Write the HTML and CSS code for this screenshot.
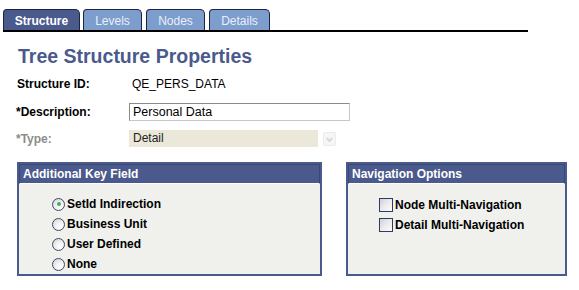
FILE: index.html
```html
<!DOCTYPE html>
<html>
<head>
<meta charset="utf-8">
<link rel="stylesheet" href="styles.css">
</head>
<body>
<div class="page">
  <div class="tabs">
    <div class="tab active t1">Structure</div>
    <div class="tab t2">Levels</div>
    <div class="tab t3">Nodes</div>
    <div class="tab t4">Details</div>
  </div>
  <h1 class="title">Tree Structure Properties</h1>
  <div class="form">
    <div class="row r1">
      <span class="label">Structure ID:</span>
      <span class="value">QE_PERS_DATA</span>
    </div>
    <div class="row r2">
      <span class="label">*Description:</span>
      <span class="input">Personal Data</span>
    </div>
    <div class="row r3">
      <span class="label disabled">*Type:</span>
      <span class="select">Detail</span>
      <span class="drop"><svg width="12" height="12" viewBox="0 0 12 12"><path d="M3 5 L6 8 L9 5" fill="none" stroke="#d6d6d6" stroke-width="2"/></svg></span>
    </div>
  </div>
  <div class="groups">
    <div class="box left">
      <div class="head">Additional Key Field</div>
      <div class="body radios">
        <div class="opt"><span class="radio on"></span>SetId Indirection</div>
        <div class="opt"><span class="radio"></span>Business Unit</div>
        <div class="opt"><span class="radio"></span>User Defined</div>
        <div class="opt"><span class="radio"></span>None</div>
      </div>
    </div>
    <div class="box right">
      <div class="head">Navigation Options</div>
      <div class="body checks">
        <div class="opt"><span class="check"></span>Node Multi-Navigation</div>
        <div class="opt"><span class="check"></span>Detail Multi-Navigation</div>
      </div>
    </div>
  </div>
</div>
</body>
</html>
```
FILE: styles.css
```css
* { box-sizing: border-box; }
html, body { margin: 0; padding: 0; background: #fff; }
body { font-family: "Liberation Sans", Arial, sans-serif; font-size: 12px; color: #000; }
.page { width: 579px; height: 290px; padding-top: 9px; }

.tabs {
  display: flex;
  margin-left: 3px;
  width: 525px;
  border-bottom: 2px solid #000;
  height: 23px;
  align-items: flex-end;
}
.tab {
  height: 21px;
  border: 1px solid #1c2540;
  border-bottom: none;
  border-radius: 4px 5px 0 0;
  background: #7d9dcd;
  color: #e9eff8;
  font-size: 12px;
  display: flex;
  align-items: center;
  justify-content: center;
  padding-top: 1px;
}
.tab.active { background: #4b5a8c; color: #fff; font-weight: bold; }
.t1 { width: 77px; }
.t2 { width: 59px; margin-left: 3px; }
.t3 { width: 59px; margin-left: 4px; }
.t4 { width: 61px; margin-left: 4px; }

.title {
  margin: 14px 0 0 18px;
  font-size: 19.5px;
  line-height: 20px;
  font-weight: bold;
  color: #4b5a8c;
}

.form { margin-top: 9px; }
.row { display: flex; align-items: center; height: 18px; }
.r2 { margin-top: 10px; }
.r3 { margin-top: 9px; height: 17px; }
.label { width: 112px; margin-left: 17px; font-weight: bold; }
.r2 .label, .r3 .label { margin-left: 16px; width: 113px; }
.label.disabled { color: #8c8c8c; }
.value { padding-left: 3px; }
.input {
  width: 221px;
  height: 18px;
  border: 1px solid #8a8a8a;
  border-right-color: #c8c8c8;
  border-bottom-color: #c8c8c8;
  padding-left: 3px;
  line-height: 16px;
  font-size: 12.5px;
}
.select {
  width: 189px;
  height: 17px;
  background: #ebe8da;
  padding-left: 4px;
  line-height: 17px;
  color: #222;
}
.drop {
  width: 13px;
  height: 14px;
  margin-left: 5px;
  border: 1px solid #ececec;
  border-radius: 2px;
  background: #f6f6f6;
  display: flex;
  align-items: center;
  justify-content: center;
}

.groups { display: flex; margin-top: 15px; padding-left: 17px; }
.box {
  height: 114px;
  border: 2px solid #4b5a8c;
  background: #f0f1ec;
  display: flex;
  flex-direction: column;
}
.box.left { width: 305px; }
.box.right { width: 221px; margin-left: 24px; }
.head {
  height: 20px;
  background: #4b5a8c;
  border: 1px solid #3a4878;
  color: #fff;
  font-weight: bold;
  padding-left: 3px;
  line-height: 18px;
  border-bottom: 1px solid #fff;
}
.opt { display: flex; align-items: center; height: 20px; font-weight: bold; font-size: 12px; }
.radios { padding-left: 33px; padding-top: 10px; }
.checks { padding-left: 31px; padding-top: 11px; }
.radio {
  width: 13px;
  height: 13px;
  border-radius: 50%;
  border: 1px solid #3d4a6a;
  background: radial-gradient(circle at 65% 70%, #ffffff 0%, #f2f2f2 40%, #cfcfcf 100%);
  margin-right: 2px;
  position: relative;
}
.radio.on::after {
  content: "";
  position: absolute;
  left: 3.5px; top: 3.5px;
  width: 4px; height: 4px;
  border-radius: 50%;
  background: #3fb24a;
}
.check {
  width: 14px;
  height: 14px;
  border: 1px solid #2f3b66;
  background: linear-gradient(135deg, #d0d0d0 0%, #ececec 50%, #fbfbfb 100%);
  margin-right: 2px;
}
```
